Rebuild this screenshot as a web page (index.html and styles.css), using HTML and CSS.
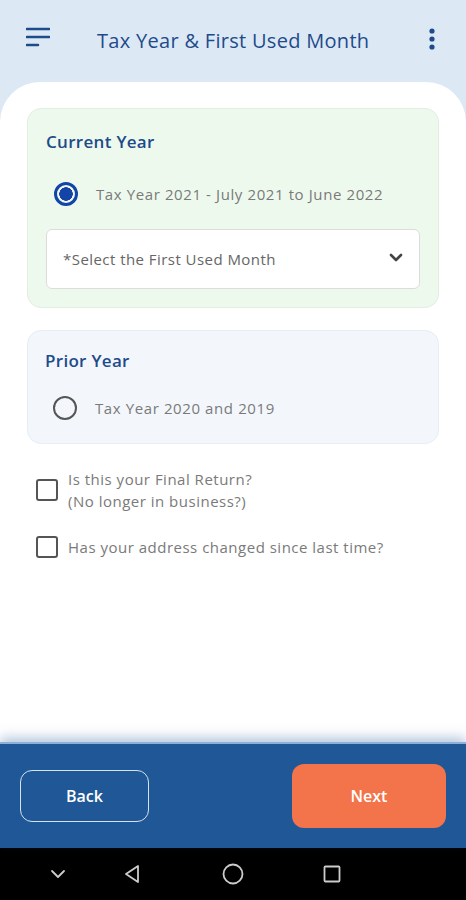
FILE: index.html
```html
<!DOCTYPE html>
<html lang="en">
<head>
    <meta charset="UTF-8">
    <meta name="viewport" content="width=device-width, initial-scale=1.0">
    <title>Tax Year &amp; First Used Month</title>
    <link rel="stylesheet" href="styles.css">
</head>
<body>
    <div class="screen">
        <header class="top-bar">
            <button class="top-bar__btn top-bar__btn--menu" aria-label="Menu">
                <svg class="top-bar__icon" viewBox="0 0 24 20">
                    <path d="M1 2H23M1 10H23M1 18H12" />
                </svg>
            </button>
            <h1 class="top-bar__title">Tax Year &amp; First Used Month</h1>
            <button class="top-bar__btn top-bar__btn--more" aria-label="More">
                <svg class="top-bar__dots" viewBox="0 0 8 24">
                    <circle cx="4" cy="4" r="2.6" />
                    <circle cx="4" cy="12" r="2.6" />
                    <circle cx="4" cy="20" r="2.6" />
                </svg>
            </button>
        </header>

        <main class="panel">
            <section class="year-card year-card--current">
                <h2 class="year-card__title">Current Year</h2>
                <label class="radio">
                    <span class="radio__mark radio__mark--checked"></span>
                    <span class="radio__text">Tax Year 2021 - July 2021 to June 2022</span>
                </label>
                <div class="select">
                    <span class="select__text">*Select the First Used Month</span>
                    <svg class="select__chevron" viewBox="0 0 14 9">
                        <path d="M2 2L7 7L12 2" />
                    </svg>
                </div>
            </section>

            <section class="year-card year-card--prior">
                <h2 class="year-card__title">Prior Year</h2>
                <label class="radio">
                    <span class="radio__mark"></span>
                    <span class="radio__text">Tax Year 2020 and 2019</span>
                </label>
            </section>

            <label class="check">
                <span class="check__box"></span>
                <span class="check__text">Is this your Final Return?<br>(No longer in business?)</span>
            </label>
            <label class="check">
                <span class="check__box"></span>
                <span class="check__text">Has your address changed since last time?</span>
            </label>
        </main>

        <footer class="actions">
            <button class="actions__btn actions__btn--back">Back</button>
            <button class="actions__btn actions__btn--next">Next</button>
        </footer>

        <nav class="sys-nav">
            <svg class="sys-nav__icon" viewBox="0 0 20 20">
                <path d="M4 7L10 13L16 7" />
            </svg>
            <svg class="sys-nav__icon" viewBox="0 0 20 20">
                <path d="M15 2V18L3 10Z" />
            </svg>
            <svg class="sys-nav__icon sys-nav__icon--home" viewBox="0 0 24 24">
                <circle cx="12" cy="12" r="9.5" />
            </svg>
            <svg class="sys-nav__icon" viewBox="0 0 20 20">
                <rect x="2.5" y="2.5" width="15" height="15" rx="1" />
            </svg>
        </nav>
    </div>
</body>
</html>
```

FILE: styles.css
```css
body {
    margin: 0;
    background: #DDE8F5;

    font-family: "Open Sans", Lato, sans-serif;
}

.screen {
    width: 466px;
    height: 900px;

    display: flex;
    flex-direction: column;
}

/* top bar */

.top-bar {
    flex: 0 0 82px;

    box-sizing: border-box;
    padding: 0 30px 0 26px;

    display: flex;
    align-items: center;
}

.top-bar__btn {
    background: transparent;
    border: 0;
    padding: 0;

    color: #1E4B8A;
}

.top-bar__btn--menu {
    width: 24px;
    height: 20px;
    margin-top: -8px;
}

.top-bar__icon {
    display: block;
    width: 24px;
    height: 20px;

    fill: none;
    stroke: currentColor;
    stroke-width: 2.6;
    stroke-linecap: round;
}

.top-bar__title {
    flex: 1 0 0;
    margin: 0 0 0 47px;

    font-size: 20px;
    font-weight: 500;
    line-height: 26px;
    letter-spacing: 0.3px;

    color: #1E4B8A;
}

.top-bar__btn--more {
    width: 8px;
    height: 24px;
    margin-top: -4px;
}

.top-bar__dots {
    display: block;
    width: 8px;
    height: 24px;

    fill: currentColor;
}

/* white panel */

.panel {
    flex: 1 0 0;

    box-sizing: border-box;
    padding: 26px 27px 0;

    background: #FFFFFF;
    border-radius: 40px 40px 0 0;
}

.year-card {
    border-radius: 14px;
    border: 1px solid;
}

.year-card--current {
    height: 200px;
    box-sizing: border-box;
    padding: 21px 18px 0 18px;

    background: #EEF9EE;
    border-color: #E1EEE1;
}

.year-card--prior {
    height: 114px;
    box-sizing: border-box;
    margin-top: 22px;
    padding: 18px 18px 0 17px;

    background: #F3F7FC;
    border-color: #E6EDF5;
}

.year-card__title {
    margin: 0;

    font-size: 17px;
    font-weight: 600;
    line-height: 24px;
    letter-spacing: 0.3px;

    color: #1E4B8A;
}

.radio {
    display: flex;
    align-items: center;
    height: 30px;
    margin: 25px 0 0 8px;
}

.year-card--prior .radio {
    margin-top: 20px;
}

.radio__mark {
    width: 24px;
    height: 24px;
    box-sizing: border-box;

    border: 2px solid #555555;
    border-radius: 50%;
}

.radio__mark--checked {
    border: 3px solid #1444A8;
    background: radial-gradient(circle, #1444A8 0 6.5px, transparent 7px);
}

.radio__text {
    margin-left: 18px;

    font-size: 15px;
    letter-spacing: 0.6px;
    color: #7A7A7A;
}

.select {
    height: 60px;
    box-sizing: border-box;
    margin-top: 20px;
    padding: 0 16px 0 16px;

    display: flex;
    align-items: center;
    justify-content: space-between;

    background: #FFFFFF;
    border: 1px solid #DADDDA;
    border-radius: 6px;
}

.select__text {
    font-size: 15px;
    letter-spacing: 0.45px;
    color: #666666;
}

.select__chevron {
    width: 14px;
    height: 9px;
    margin-top: -3px;

    fill: none;
    stroke: #444444;
    stroke-width: 2.6;
    stroke-linecap: round;
    stroke-linejoin: round;
}

/* checkboxes */

.check {
    display: flex;
    align-items: center;
    margin: 24px 0 0 9px;
}

.check + .check {
    margin-top: 24px;
}

.check__box {
    flex: 0 0 22px;
    height: 22px;
    box-sizing: border-box;

    border: 2px solid #555555;
    border-radius: 3px;
}

.check__text {
    margin-left: 10px;

    font-size: 15px;
    line-height: 22px;
    letter-spacing: 0.5px;
    color: #7A7A7A;
}

/* footer */

.actions {
    flex: 0 0 104px;

    box-sizing: border-box;
    padding: 0 20px;

    display: flex;
    align-items: center;
    justify-content: space-between;

    background: #1F5797;
    box-shadow: 0 -2px 0 #8EB0D6, 0 -6px 12px rgba(31, 87, 151, 0.35);

    position: relative;
}

.actions__btn {
    box-sizing: border-box;

    font-family: "Open Sans", Lato, sans-serif;
    font-size: 16px;
    font-weight: 600;

    color: #FFFFFF;
    border-radius: 12px;
}

.actions__btn--back {
    width: 129px;
    height: 52px;

    background: transparent;
    border: 1.5px solid #D5E2F1;
}

.actions__btn--next {
    width: 154px;
    height: 64px;

    background: #F3734A;
    border: 0;
}

/* android nav */

.sys-nav {
    flex: 0 0 52px;

    display: flex;
    align-items: center;

    background: #000000;
}

.sys-nav__icon {
    width: 20px;
    height: 20px;

    fill: none;
    stroke: #CCCCCC;
    stroke-width: 1.8;
    stroke-linejoin: round;
    stroke-linecap: round;
}

.sys-nav__icon:nth-child(1) {
    margin-left: 48px;
}

.sys-nav__icon:nth-child(2) {
    margin-left: 55px;
}

.sys-nav__icon--home {
    width: 24px;
    height: 24px;
    margin-left: 78px;
}

.sys-nav__icon:nth-child(4) {
    margin-left: 77px;
}
```
